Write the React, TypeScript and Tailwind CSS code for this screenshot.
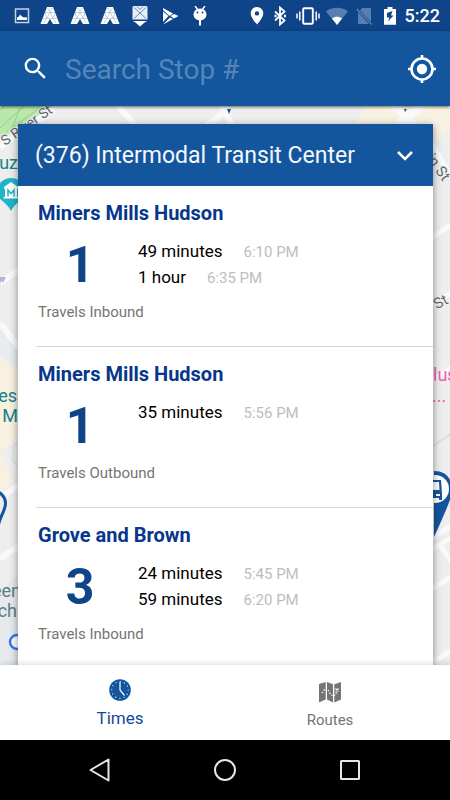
import { useState } from "react";

type Arrival = { wait: string; time: string };
type StopRoute = { name: string; number: string; direction: string; arrivals: Arrival[] };

const stopRoutes: StopRoute[] = [
  {
    name: "Miners Mills Hudson",
    number: "1",
    direction: "Travels Inbound",
    arrivals: [
      { wait: "49 minutes", time: "6:10 PM" },
      { wait: "1 hour", time: "6:35 PM" },
    ],
  },
  {
    name: "Miners Mills Hudson",
    number: "1",
    direction: "Travels Outbound",
    arrivals: [{ wait: "35 minutes", time: "5:56 PM" }],
  },
  {
    name: "Grove and Brown",
    number: "3",
    direction: "Travels Inbound",
    arrivals: [
      { wait: "24 minutes", time: "5:45 PM" },
      { wait: "59 minutes", time: "6:20 PM" },
    ],
  },
];

function TreeIcon() {
  return (
    <svg className="h-5 w-5" viewBox="0 0 20 20" fill="#fff">
      <path d="M7 1h6l6.500 17h-6.500L10 13l-3 5H.5z" />
      <path
        d="M7.500 2l2.500 4 2.500-4M5 6.500h10M10 6.500l-3 5.500M10 6.500l3 5.500M3 12.500h14M5 7l2 5-3 5M15 7l-2 5 3 5"
        fill="none"
        stroke="#a9bdd9"
        strokeWidth="0.700"
      />
    </svg>
  );
}

function StatusBar() {
  return (
    <div className="flex h-[31px] shrink-0 items-center justify-between bg-[#0f4489] pr-[10px] pl-[14px]">
      <div className="flex items-center gap-[10px]">
        <svg className="h-4 w-4" viewBox="0 0 16 16">
          <rect x="1.500" y="1" width="13" height="13.500" fill="none" stroke="#c3d0e2" strokeWidth="1.500" />
          <path d="M3 12V9.500l2-1 1-2 2 2 2 1 2-.5 1 1V12z" fill="#fff" />
        </svg>
        <TreeIcon />
        <TreeIcon />
        <TreeIcon />
        <svg className="h-[22px] w-5" viewBox="0 0 20 22">
          <path d="M3.500 1h13l1 1v12.500h-15V2z" fill="#e6edf6" />
          <path d="M3 16h14l-3 2-4 3.500L6 18z" fill="#fff" />
          <path d="M4 2.500l12 11M16 2.500l-12 11M7 1.500l3 3 3-3" fill="none" stroke="#6a8cbd" strokeWidth="1" />
        </svg>
        <svg className="h-5 w-5" viewBox="0 0 20 20">
          <path d="M3 2l10 5.500-3.500 2.500L3 4z" fill="#fff" />
          <path d="M3 5.500l5.500 4.500L3 16z" fill="#fff" />
          <path d="M14 8l4.500 2-4.500 2.500-3.500-2.500z" fill="#fff" />
          <path d="M3 18.500l7-7 3 1.500z" fill="#fff" />
          <path d="M2.200 1v17.500" fill="none" stroke="#00358e" strokeWidth="1.200" />
        </svg>
        <svg className="h-5 w-5" viewBox="0 0 20 20" fill="#fff">
          <ellipse cx="10" cy="8.500" rx="6.500" ry="6" />
          <path d="M5 0l3 4M15 0l-3 4" stroke="#fff" strokeWidth="1.500" />
          <path d="M9 14h2v5.500H9z" />
          <circle cx="7.500" cy="6.500" r="0.900" fill="#0f4489" />
          <circle cx="12.500" cy="6.500" r="0.900" fill="#0f4489" />
        </svg>
      </div>
      <div className="flex items-center">
        <svg className="mr-2 h-5 w-[14px]" viewBox="0 0 14 20">
          <path
            d="M7 1a6.300 6.300 0 0 0-6.300 6.300C.7 12 7 18.500 7 18.500s6.300-6.500 6.300-11.200A6.300 6.300 0 0 0 7 1zm0 4.200a2.200 2.200 0 1 1 0 4.400 2.200 2.200 0 0 1 0-4.400z"
            fill="#fff"
          />
        </svg>
        <svg className="mr-2 h-5 w-4" viewBox="0 0 16 20">
          <path
            d="M3 5.500l9.500 9L8 18.500v-17l4.500 4L3 14.500"
            fill="none"
            stroke="#fff"
            strokeWidth="1.800"
          />
          <path d="M2.500 8.800h2v2.400h-2zM12 8.800h2v2.400h-2z" fill="#fff" />
        </svg>
        <svg className="mr-[6px] h-5 w-6" viewBox="0 0 24 20">
          <rect x="7.200" y="2.200" width="9.600" height="15.600" rx="1" fill="none" stroke="#fff" strokeWidth="1.900" />
          <path d="M1 7.500v5M3.800 5.500v9M20.200 5.500v9M23 7.500v5" stroke="#fff" strokeWidth="1.500" />
        </svg>
        <svg className="mr-2 h-5 w-[22px]" viewBox="0 0 22 20">
          <path d="M0 5.500C6 .5 16 .5 22 5.500L11 19z" fill="#587eb2" />
          <path d="M6 12.500c3-2.200 7-2.200 10 0L11 19z" fill="#fff" />
        </svg>
        <svg className="mr-[10px] h-5 w-[17px]" viewBox="0 0 17 20">
          <path d="M6 2h8q1 0 1 1v13L4 4.500z" fill="#587eb2" />
          <path d="M2 6L13 18H3q-1 0-1-1z" fill="#587eb2" />
          <path d="M.7 3l15 15.500" stroke="#587eb2" strokeWidth="1.500" />
        </svg>
        <svg className="mr-2 h-5 w-[14px]" viewBox="0 0 14 20">
          <path d="M4.500 1h5v2H13v15.800H1V3h3.500z" fill="#fff" />
          <path d="M9.500 5L4 7v4.500h2.500L5 15.500l5.500-6H8z" fill="#0f4489" />
        </svg>
        <span className="text-lg font-medium text-white">5:22</span>
      </div>
    </div>
  );
}

function SearchHeader() {
  const [query, setQuery] = useState("");

  return (
    <header className="relative z-10 flex h-[75px] shrink-0 items-center bg-[#14569d] pr-[13px] pl-[21px] shadow-[0_1px_3px_rgba(0,0,0,0.6)]">
      <svg className="h-[29px] w-[29px] shrink-0" viewBox="0 0 24 24" fill="#fff">
        <path d="M15.500 14h-.79l-.28-.27A6.470 6.470 0 0 0 16 9.500 6.500 6.500 0 1 0 9.500 16c1.610 0 3.090-.59 4.230-1.570l.27.28v.79l5 4.990L20.490 19l-4.990-5zm-6 0C7.010 14 5 11.990 5 9.500S7.010 5 9.500 5 14 7.010 14 9.500 11.990 14 9.500 14z" />
      </svg>
      <input
        type="text"
        aria-label="Search stop number"
        placeholder="Search Stop #"
        value={query}
        onChange={(e) => setQuery(e.target.value)}
        className="ml-[15px] min-w-0 flex-1 bg-transparent pt-[2px] text-[28px] text-white outline-none placeholder:text-[#5585b8]"
      />
      <button type="button" aria-label="Use my location">
        <svg className="h-[30px] w-[30px]" viewBox="0 0 30 30">
          <circle cx="15" cy="15" r="10.500" fill="none" stroke="#fff" strokeWidth="2.600" />
          <circle cx="15" cy="15" r="5.200" fill="#fff" />
          <path d="M15 1v4M15 25v4M1 15h4M25 15h4" stroke="#fff" strokeWidth="2.600" />
        </svg>
      </button>
    </header>
  );
}

function MapBackground() {
  return (
    <svg
      className="absolute inset-0 h-full w-full"
      viewBox="0 106 450 559"
      preserveAspectRatio="xMidYMid slice"
      aria-hidden="true"
    >
      <rect x="-200" y="0" width="900" height="800" fill="#eeeeee" />

      {/* blocks */}
      <path d="M0 106h54L0 139z" fill="#b9e8a8" />
      <path d="M0 128L24 106M6 132L40 108M4 106L0 110M12 128L20 108" stroke="#8ed48b" strokeWidth="1" />
      <path d="M366 106h84v24l-18 14-20-20h-58z" fill="#f8f2e2" />
      <path d="M0 324l18 24v20L0 356z" fill="#e8ecef" />
      <path d="M0 357l18 14v70L0 450z" fill="#f8f0e0" />
      <path d="M0 450l13 32-13 10z" fill="#f8f0e0" />
      <path d="M0 590l18-14v89H0z" fill="#e6eaed" />
      <path d="M13 446l6-4v24l-6-4z" fill="#eeeeee" stroke="#dcdcdc" strokeWidth="1" />

      {/* streets */}
      <g fill="none" stroke="#fafafa" strokeWidth="6">
        <path d="M0 147l54-38" />
        <path d="M118 106l18 20M206 126l24-18M222 106l12 22" />
        <path d="M392 104l22 20M424 104l-26 20" strokeWidth="8" />
        <path d="M430 141l24 40M430 239l24-16M430 306l24-15M430 382l24-16" strokeWidth="5" />
        <path d="M0 283l20-14M0 323l20 26M0 498l20-14M0 559l20-14" />
        <path d="M430 539l24-15M430 551l24-15M440 545l14 20M430 590l24-15M430 664l24-15" strokeWidth="5" />
      </g>
      <path d="M430 448l22-15" stroke="#dddddd" strokeWidth="2" />
      <path d="M-1 277l7 0-3 6-1-2-3 3z" fill="#b4b8d4" />

      {/* markers peeking out behind the card */}
      <path d="M227 109h4l-2 5zM404 109h3l-2 3z" fill="#14569d" />
      <path d="M11 178a14 14 0 0 1 14 14c0 8-10 10-14 19C7 202-3 200-3 192a14 14 0 0 1 14-14z" fill="#1fb5c8" />
      <path d="M4 187l7-5 7 5v1.500h-1v8.500h1.500v1.500h-15V197H5v-8.500H4z" fill="#fff" />
      <path d="M8 196.500V190l3 3.500 3-3.500v6.500" fill="none" stroke="#1fb5c8" strokeWidth="1.500" />
      <path d="M-7 491a12.500 12.500 0 0 1 12.500 12.500c0 7-5 11-7.500 23" fill="#eeeeee" stroke="#14569d" strokeWidth="3" />
      <path d="M434 471c11 0 18 7 18 18 0 8-4 17-18 48z" fill="#14569d" />
      <circle cx="435" cy="489" r="14" fill="#fff" />
      <path d="M430 480h11l1 14v6h-3v-2h-9z" fill="#14569d" />
      <path d="M430 482h9l.5 8H430zM436 496h4v-2h-4z" fill="#fff" />
      <circle cx="17" cy="642" r="7" fill="#fff" stroke="#3478f0" strokeWidth="2.500" />

      {/* labels */}
      <g fontSize="15" fill="#63686d" stroke="#f4f4f4" strokeWidth="2" paintOrder="stroke">
        <text transform="translate(5 146) rotate(-35)" fontSize="14">
          S River St
        </text>
        <text textAnchor="end" transform="translate(443 182) rotate(54)">Main St</text>
        <text textAnchor="end" transform="translate(449 303) rotate(-28)">State St</text>
      </g>
      <g fontSize="18" fill="#158288">
        <text x="18" y="169" textAnchor="end">Luz</text>
        <text x="17" y="402" textAnchor="end">es</text>
        <text x="18" y="422" textAnchor="end">M</text>
      </g>
      <g fontSize="18" fill="#5c7d8a">
        <text x="21" y="597" textAnchor="end">een</text>
        <text x="17" y="617" textAnchor="end">ch</text>
      </g>
      <g fontSize="18" fill="#eb62b4">
        <text x="433" y="381">lus</text>
        <text x="432" y="402">...</text>
      </g>
    </svg>
  );
}

function RouteRow({ route }: { route: StopRoute }) {
  return (
    <li className="ml-[18px] border-b border-[#d5d6d6] pt-[14px] pb-6 pl-[2px] last:border-b-0">
      <h2 className="text-xl leading-[26px] font-bold text-[#06378b]">{route.name}</h2>
      <div className="mt-3 flex h-[54px]">
        <div className="w-[100px] pr-4 text-center text-[50px] leading-[54px] font-bold text-[#0f4489]">
          {route.number}
        </div>
        <ul>
          {route.arrivals.map((arrival) => (
            <li key={arrival.time} className="flex h-[26px] items-baseline gap-[21px]">
              <span className="text-[17px] leading-[26px] text-black">{arrival.wait}</span>
              <span className="text-[15px] leading-[26px] text-[#bdbdbd]">{arrival.time}</span>
            </li>
          ))}
        </ul>
      </div>
      <p className="mt-[10px] text-[15px] leading-5 text-[#757575]">{route.direction}</p>
    </li>
  );
}

function StopCard() {
  return (
    <section className="relative mt-[18px] mr-[17px] ml-[18px] h-full bg-white shadow-[0_2px_8px_rgba(0,0,0,0.45)]">
      <button
        type="button"
        className="flex h-[62px] w-full items-center justify-between bg-[#14569d] pr-4 pl-[17px] text-left text-[23px] text-[#f4f7fb]"
      >
        <span className="truncate pt-[2px]">(376) Intermodal Transit Center</span>
        <svg className="h-6 w-6 shrink-0" viewBox="0 0 24 24">
          <path d="M5 9l7 7 7-7" fill="none" stroke="#fff" strokeWidth="2.500" />
        </svg>
      </button>
      <ul>
        {stopRoutes.map((route) => (
          <RouteRow key={`${route.name} ${route.direction}`} route={route} />
        ))}
      </ul>
    </section>
  );
}

function TabBar() {
  return (
    <nav className="relative z-10 grid h-[75px] shrink-0 grid-cols-2 bg-white px-[15px] shadow-[0_-1px_6px_rgba(0,0,0,0.15)]">
      <button type="button" className="flex flex-col items-center pt-[14px] text-[#14479c]">
        <svg className="h-[22px] w-[22px]" viewBox="0 0 22 22">
          <circle cx="11" cy="11" r="10.800" fill="#14569d" />
          <circle
            cx="11"
            cy="11"
            r="8.300"
            fill="none"
            stroke="#dce8f4"
            strokeWidth="1.300"
            strokeDasharray="1 3.346"
            strokeDashoffset="0.500"
          />
          <path d="M11 3v8l4.500 5.500" fill="none" stroke="#fff" strokeWidth="1.200" />
        </svg>
        <span className="mt-[5px] text-[17px] leading-6">Times</span>
      </button>
      <button type="button" className="flex flex-col items-center pt-4 text-[#757575]">
        <svg className="h-[22px] w-[22px]" viewBox="0 0 22 22" fill="#757575">
          <path d="M0 3l6.700-2v17.500L0 21.500zM8 1l6 2.300v18.200l-6-3zM15.300 3.300L22 1v17.500l-6.700 3z" />
          <path
            d="M3 12l3-4M9 9l3 5 3 1 3-4"
            fill="none"
            stroke="#fff"
            strokeWidth="1.200"
            strokeDasharray="1.500 1.500"
          />
          <path d="M16.500 7.500l3 3M19.500 7.500l-3 3" stroke="#fff" strokeWidth="1.200" />
        </svg>
        <span className="mt-[7px] text-[15px] leading-5">Routes</span>
      </button>
    </nav>
  );
}

function SystemNav() {
  return (
    <div className="flex h-[60px] shrink-0 items-center justify-center gap-[101px] bg-black">
      <button type="button" aria-label="Back">
        <svg className="h-6 w-6" viewBox="0 0 24 24">
          <path d="M20.500 1.500v21L2.500 12z" fill="none" stroke="#e6e6e6" strokeWidth="2" strokeLinejoin="round" />
        </svg>
      </button>
      <button type="button" aria-label="Home">
        <svg className="h-6 w-6" viewBox="0 0 24 24">
          <circle cx="12" cy="12" r="10" fill="none" stroke="#e6e6e6" strokeWidth="2" />
        </svg>
      </button>
      <button type="button" aria-label="Recent apps">
        <svg className="h-6 w-6" viewBox="0 0 24 24">
          <rect x="3" y="3" width="18" height="18" rx="0.500" fill="none" stroke="#e6e6e6" strokeWidth="2" />
        </svg>
      </button>
    </div>
  );
}

export default function App() {
  return (
    <div className="flex h-screen flex-col overflow-hidden bg-white font-[Roboto,sans-serif]">
      <StatusBar />
      <SearchHeader />
      <main className="relative min-h-0 flex-1 overflow-hidden">
        <MapBackground />
        <StopCard />
      </main>
      <TabBar />
      <SystemNav />
    </div>
  );
}
